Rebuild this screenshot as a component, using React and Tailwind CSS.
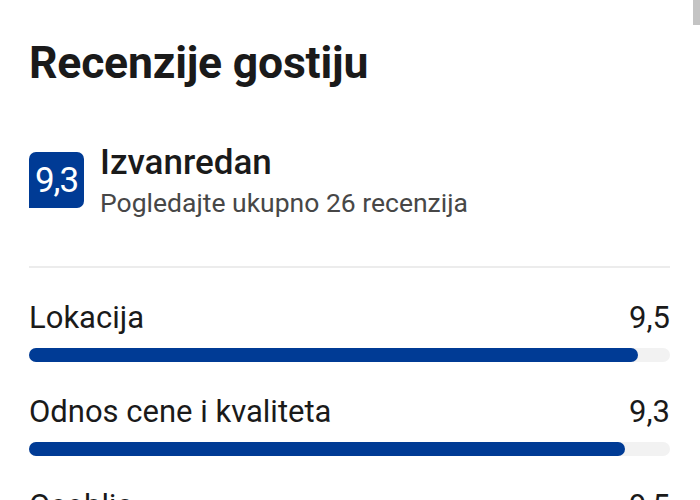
import React from "react";

const rows = [
  { label: "Lokacija", value: "9,5", score: 9.5 },
  { label: "Odnos cene i kvaliteta", value: "9,3", score: 9.3 },
  { label: "Osoblje", value: "9,5", score: 9.5 },
];

export default function App() {
  return (
    <div className="relative h-[500px] w-[700px] overflow-hidden bg-white text-[#1a1a1a]" style={{ fontFamily: "Roboto, 'Noto Sans', sans-serif" }}>
      <div className="absolute right-0 top-0 h-[25px] w-[7px] bg-[#c4c4c4]" />
      <div className="pl-[29px] pr-[30px] pt-[37px]">
        <h1 className="text-[44.5px] font-bold leading-[52px] tracking-[-0.2px]">Recenzije gostiju</h1>
        <div className="mt-[53px] flex items-start gap-[16px]">
          <div className="mt-[10px] flex h-[56px] w-[55px] shrink-0 items-center justify-center rounded-t-[7px] rounded-br-[7px] bg-[#003b95] pt-[1px] text-[35px] leading-none tracking-[-1px] text-white">9,3</div>
          <div className="flex flex-col">
            <span className="text-[35px] font-medium leading-[42px]">Izvanredan</span>
            <span className="mt-[3px] text-[26.5px] leading-[32px] text-[#474747]">Pogledajte ukupno 26 recenzija</span>
          </div>
        </div>
        <div className="mt-[47px] h-[2px] bg-[#ececec]" />
        <div className="mt-[31px] flex flex-col gap-[31px]">
          {rows.map((r) => (
            <div key={r.label} className="flex flex-col">
              <div className="flex items-baseline justify-between text-[31px] leading-[38px]">
                <span>{r.label}</span>
                <span>{r.value}</span>
              </div>
              <div className="mt-[11px] h-[14px] rounded-full bg-[#f2f2f2]">
                <div className="h-full rounded-full bg-[#003b95]" style={{ width: `${r.score * 10}%` }} />
              </div>
            </div>
          ))}
        </div>
      </div>
    </div>
  );
}
